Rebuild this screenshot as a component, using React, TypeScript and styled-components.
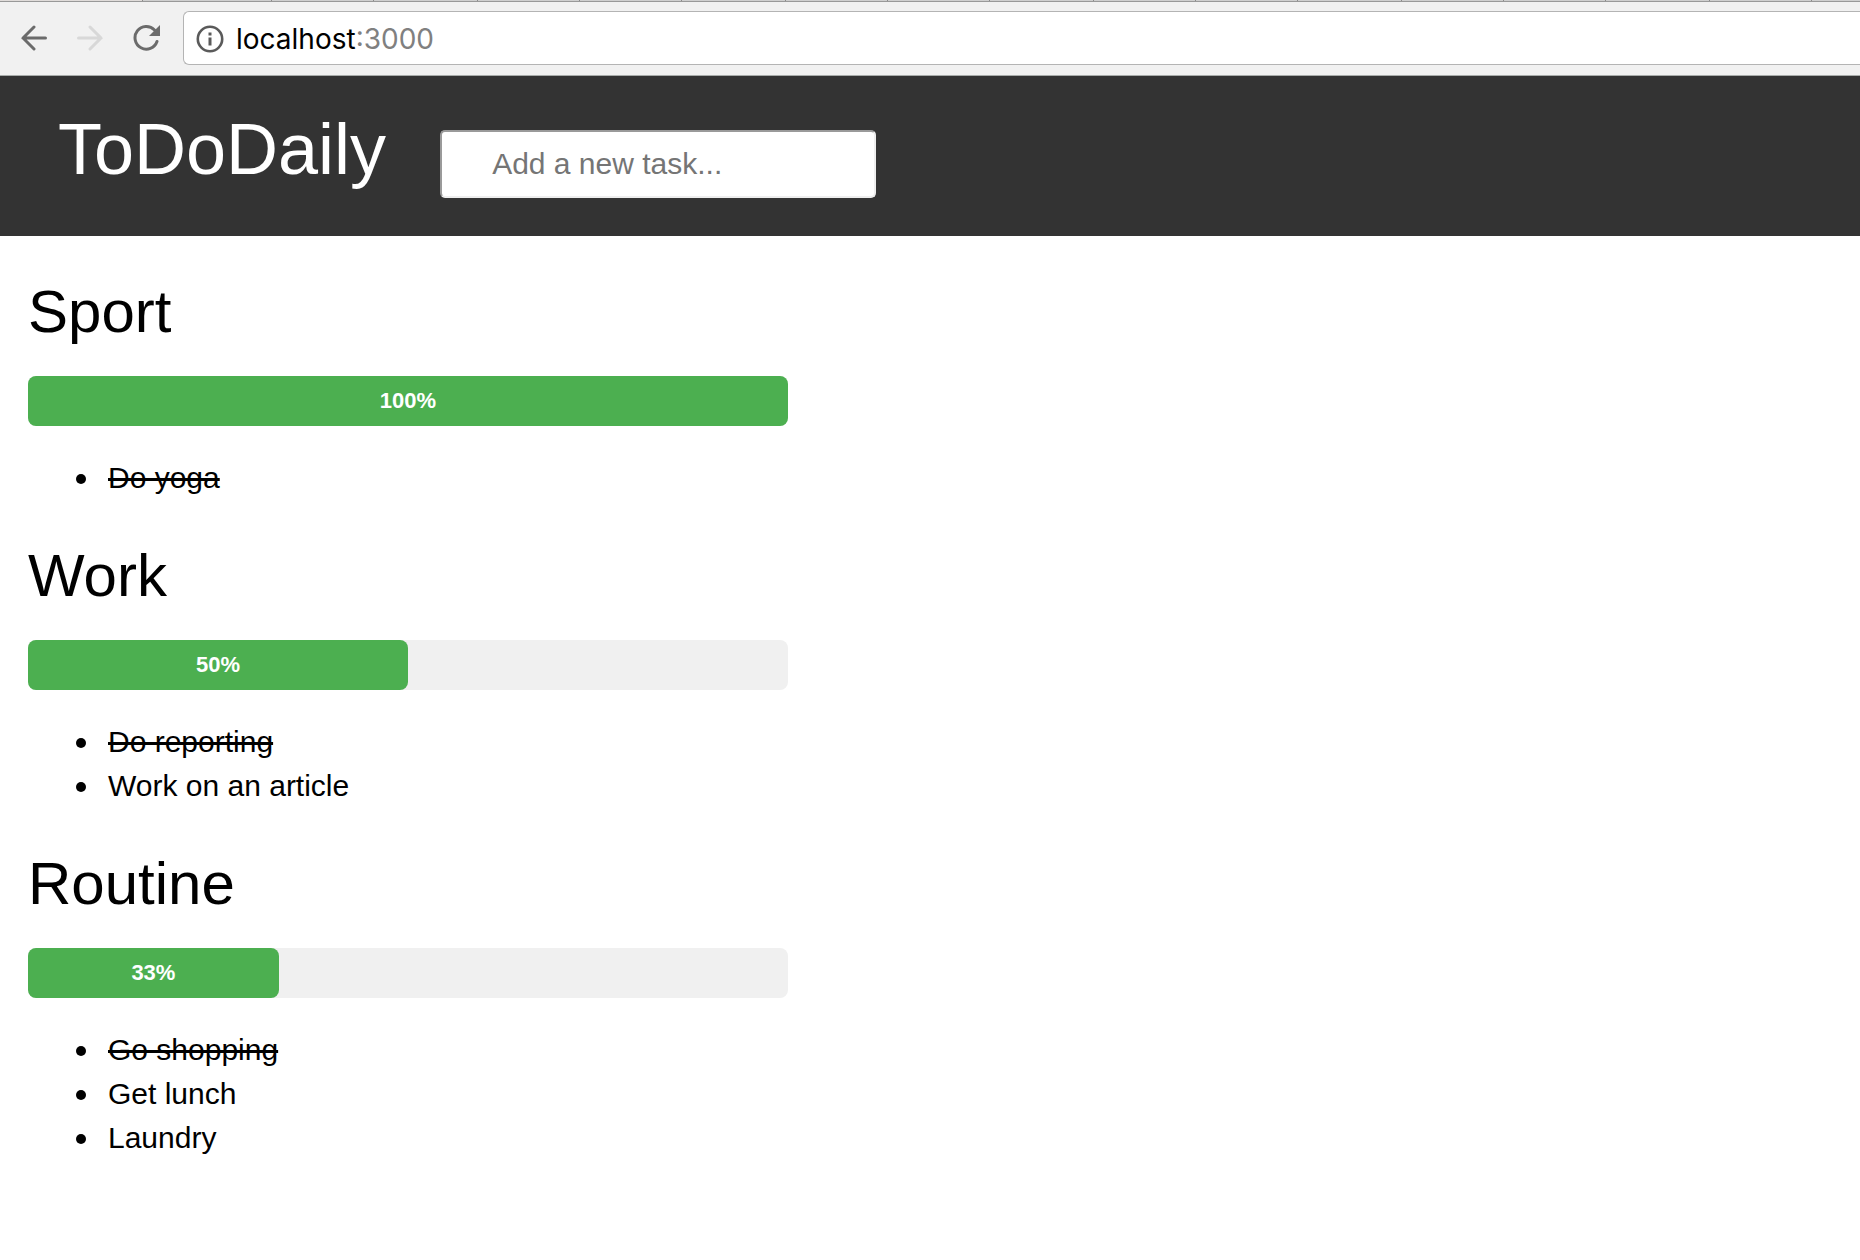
import React, { useState } from "react";
import styled, { createGlobalStyle, css } from "styled-components";

const GlobalStyle = createGlobalStyle`
  *, *::before, *::after { box-sizing: border-box; }
  body {
    margin: 0;
    background: #fff;
    color: #000;
    font-family: "Liberation Sans", Arial, Helvetica, sans-serif;
    font-size: 30px;
    line-height: 44px;
  }
`;

const TabStrip = styled.div`
  display: flex;
  height: 2px;
  overflow: hidden;
  background: #cfcfcf;
  border-bottom: 1px solid #999;
`;

const Tab = styled.span`
  flex: none;
  width: 102px;
  border-right: 1px solid #8c8c8c;

  &:nth-child(3n + 1) {
    width: 104px;
  }

  &:nth-child(1) {
    width: 143px;
    background: #e0dcda;
  }

  &:nth-child(2) {
    width: 129px;
  }
`;

const Toolbar = styled.div`
  display: flex;
  align-items: center;
  height: 74px;
  padding: 0 0 1px 15px;
  background: #f1f1f1;
  border-bottom: 1px solid #a8acaa;
`;

const NavButton = styled.button`
  display: flex;
  align-items: center;
  justify-content: center;
  flex: none;
  width: 40px;
  height: 40px;
  margin-right: 16px;
  padding: 0;
  border: 0;
  background: none;
  color: #6b6b6b;

  &:disabled {
    color: #d8d8d8;
  }
`;

const AddressBar = styled.div`
  display: flex;
  flex: 1;
  align-items: center;
  height: 54px;
  padding: 1px 0 0 12px;
  background: #fff;
  border: 1px solid #b4b4b4;
  border-right: 0;
  border-radius: 6px 0 0 6px;
`;

const InfoButton = styled.button`
  display: flex;
  flex: none;
  margin-right: 12px;
  padding: 0;
  border: 0;
  background: none;
  color: #5a5a5a;
`;

const AddressInput = styled.input<{ $muted?: boolean }>`
  field-sizing: content;
  height: 40px;
  padding: 0;
  border: 0;
  outline: 0;
  background: none;
  color: ${(p) => (p.$muted ? "#808080" : "#000")};
  font: 28px/40px Inter, "Liberation Sans", sans-serif;
`;

const Header = styled.header`
  display: flex;
  align-items: baseline;
  height: 160px;
  padding: 32px 58px 0;
  background: #333;
  color: #fff;
`;

const Brand = styled.h1`
  margin: 0 54px 0 0;
  font-size: 72px;
  font-weight: 400;
  line-height: 82px;
`;

const TaskInput = styled.input`
  width: 436px;
  height: 68px;
  padding: 0 50px;
  border: 2px solid;
  border-color: #9a9a9a #eee #eee #9a9a9a;
  border-radius: 5px;
  background: #fff;
  color: #000;
  font: 30px "Liberation Sans", Arial, sans-serif;

  &::placeholder {
    color: #757575;
    opacity: 1;
  }
`;

const Main = styled.main`
  display: flex;
  flex-direction: column;
  gap: 42px;
  max-width: 816px;
  padding: 42px 28px;
`;

const CategoryTitle = styled.h2`
  margin: 0 0 30px;
  font-size: 60px;
  font-weight: 400;
  line-height: 68px;
`;

const Track = styled.div`
  height: 50px;
  border-radius: 8px;
  background: #f0f0f0;
`;

const Fill = styled.div`
  height: 50px;
  border-radius: 8px;
  background: #4caf50;
  color: #fff;
  font-size: 22px;
  font-weight: 700;
  line-height: 50px;
  text-align: center;
`;

const TaskList = styled.ul`
  margin: 30px 0 0;
  padding: 0 0 0 48px;
  list-style: none;
`;

const Task = styled.li<{ $done?: boolean }>`
  display: flex;
  align-items: center;
  gap: 22px;

  &::before {
    content: "";
    width: 10px;
    height: 10px;
    margin-top: 2px;
    border-radius: 50%;
    background: currentColor;
  }

  ${(p) =>
    p.$done &&
    css`
      text-decoration: line-through;
    `}
`;

type TaskItem = { name: string; done: boolean };
type Category = { name: string; tasks: TaskItem[] };

const initial: Category[] = [
  { name: "Sport", tasks: [{ name: "Do yoga", done: true }] },
  {
    name: "Work",
    tasks: [
      { name: "Do reporting", done: true },
      { name: "Work on an article", done: false },
    ],
  },
  {
    name: "Routine",
    tasks: [
      { name: "Go shopping", done: true },
      { name: "Get lunch", done: false },
      { name: "Laundry", done: false },
    ],
  },
];

const BackIcon = () => (
  <svg width="28" height="28" viewBox="0 0 28 28" fill="none" stroke="currentColor" strokeWidth="3" strokeLinecap="round">
    <path d="M24.5 14H2M13 3 2 14l11 11" />
  </svg>
);

const ForwardIcon = () => (
  <svg width="28" height="28" viewBox="0 0 28 28" fill="none" stroke="currentColor" strokeWidth="3" strokeLinecap="round">
    <path d="M1.500 14H24M13 3l11 11-11 11" />
  </svg>
);

const ReloadIcon = () => (
  <svg width="28" height="28" viewBox="0 0 28 28" fill="none">
    <path d="M24 17.5A11.3 11.3 0 1 1 21.500 6" stroke="currentColor" strokeWidth="3" strokeLinecap="round" />
    <path d="M27 1v11H16z" fill="currentColor" />
  </svg>
);

const InfoIcon = () => (
  <svg width="28" height="28" viewBox="0 0 28 28" fill="none">
    <circle cx="14" cy="14" r="12.2" stroke="currentColor" strokeWidth="2.6" />
    <path d="M12.5 7.5h3v3h-3zM12.5 12.5h3v8h-3z" fill="currentColor" />
  </svg>
);

function CategorySection({ category }: { category: Category }) {
  const done = category.tasks.filter((t) => t.done).length;
  const percent = Math.floor((done / category.tasks.length) * 100);
  return (
    <section>
      <CategoryTitle>{category.name}</CategoryTitle>
      <Track role="progressbar" aria-label={category.name} aria-valuenow={percent} aria-valuemin={0} aria-valuemax={100}>
        <Fill style={{ width: `${percent}%` }}>{percent}%</Fill>
      </Track>
      <TaskList>
        {category.tasks.map((t) => (
          <Task key={t.name} $done={t.done}>
            {t.name}
          </Task>
        ))}
      </TaskList>
    </section>
  );
}

export default function App() {
  const [draft, setDraft] = useState("");
  return (
    <>
      <GlobalStyle />
      <TabStrip>
        {Array.from({ length: 18 }, (_, i) => (
          <Tab key={i} />
        ))}
      </TabStrip>
      <Toolbar>
        <NavButton aria-label="Back"><BackIcon /></NavButton>
        <NavButton aria-label="Forward" disabled><ForwardIcon /></NavButton>
        <NavButton aria-label="Reload"><ReloadIcon /></NavButton>
        <AddressBar>
          <InfoButton aria-label="Site information"><InfoIcon /></InfoButton>
          <AddressInput aria-label="Host" defaultValue="localhost" />
          <AddressInput aria-label="Port" defaultValue=":3000" $muted />
        </AddressBar>
      </Toolbar>
      <Header>
        <Brand>ToDoDaily</Brand>
        <TaskInput
          aria-label="Add a new task"
          placeholder="Add a new task..."
          value={draft}
          onChange={(e) => setDraft(e.target.value)}
        />
      </Header>
      <Main>
        {initial.map((c) => (
          <CategorySection key={c.name} category={c} />
        ))}
      </Main>
    </>
  );
}
